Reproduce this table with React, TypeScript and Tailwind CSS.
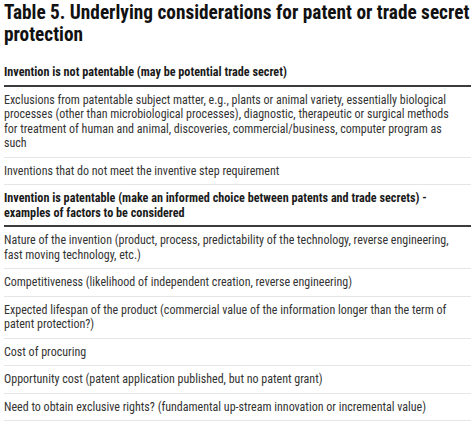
const groups = [
  {
    head: "Invention is not patentable (may be potential trade secret)",
    rows: [
      "Exclusions from patentable subject matter, e.g., plants or animal variety, essentially biological processes (other than microbiological processes), diagnostic, therapeutic or surgical methods for treatment of human and animal, discoveries, commercial/business, computer program as such",
      "Inventions that do not meet the inventive step requirement",
    ],
  },
  {
    head: "Invention is patentable (make an informed choice between patents and trade secrets) - examples of factors to be considered",
    rows: [
      "Nature of the invention (product, process, predictability of the technology, reverse engineering, fast moving technology, etc.)",
      "Competitiveness (likelihood of independent creation, reverse engineering)",
      "Expected lifespan of the product (commercial value of the information longer than the term of patent protection?)",
      "Cost of procuring",
      "Opportunity cost (patent application published, but no patent grant)",
      "Need to obtain exclusive rights? (fundamental up-stream innovation or incremental value)",
    ],
  },
];

export default function App() {
  return (
    <div className="w-[474px] h-[424px] overflow-hidden bg-white pl-[4px] pr-[3px] pt-[2px] font-['Roboto',sans-serif] font-stretch-[75%] text-[#222]">
      <h1 className="text-[19.3px] font-bold leading-[22px] text-[#111]">
        Table 5. Underlying considerations for patent or trade secret protection
      </h1>
      <div className="mt-[13px]">
        {groups.map((g, i) => (
          <div key={i}>
            <div className="border-b-2 border-[#3c3c3c] pt-[6px] pb-[5px] pr-[14px] text-[12.2px] font-bold leading-[14.5px] text-[#1a1a1a]">
              {g.head}
            </div>
            {g.rows.map((r, j) => (
              <div
                key={j}
                className="border-b border-[#e6e6e6] py-[6px] pr-[14px] text-[12px] leading-[14.5px] text-[#333]"
              >
                {r}
              </div>
            ))}
          </div>
        ))}
      </div>
    </div>
  );
}
